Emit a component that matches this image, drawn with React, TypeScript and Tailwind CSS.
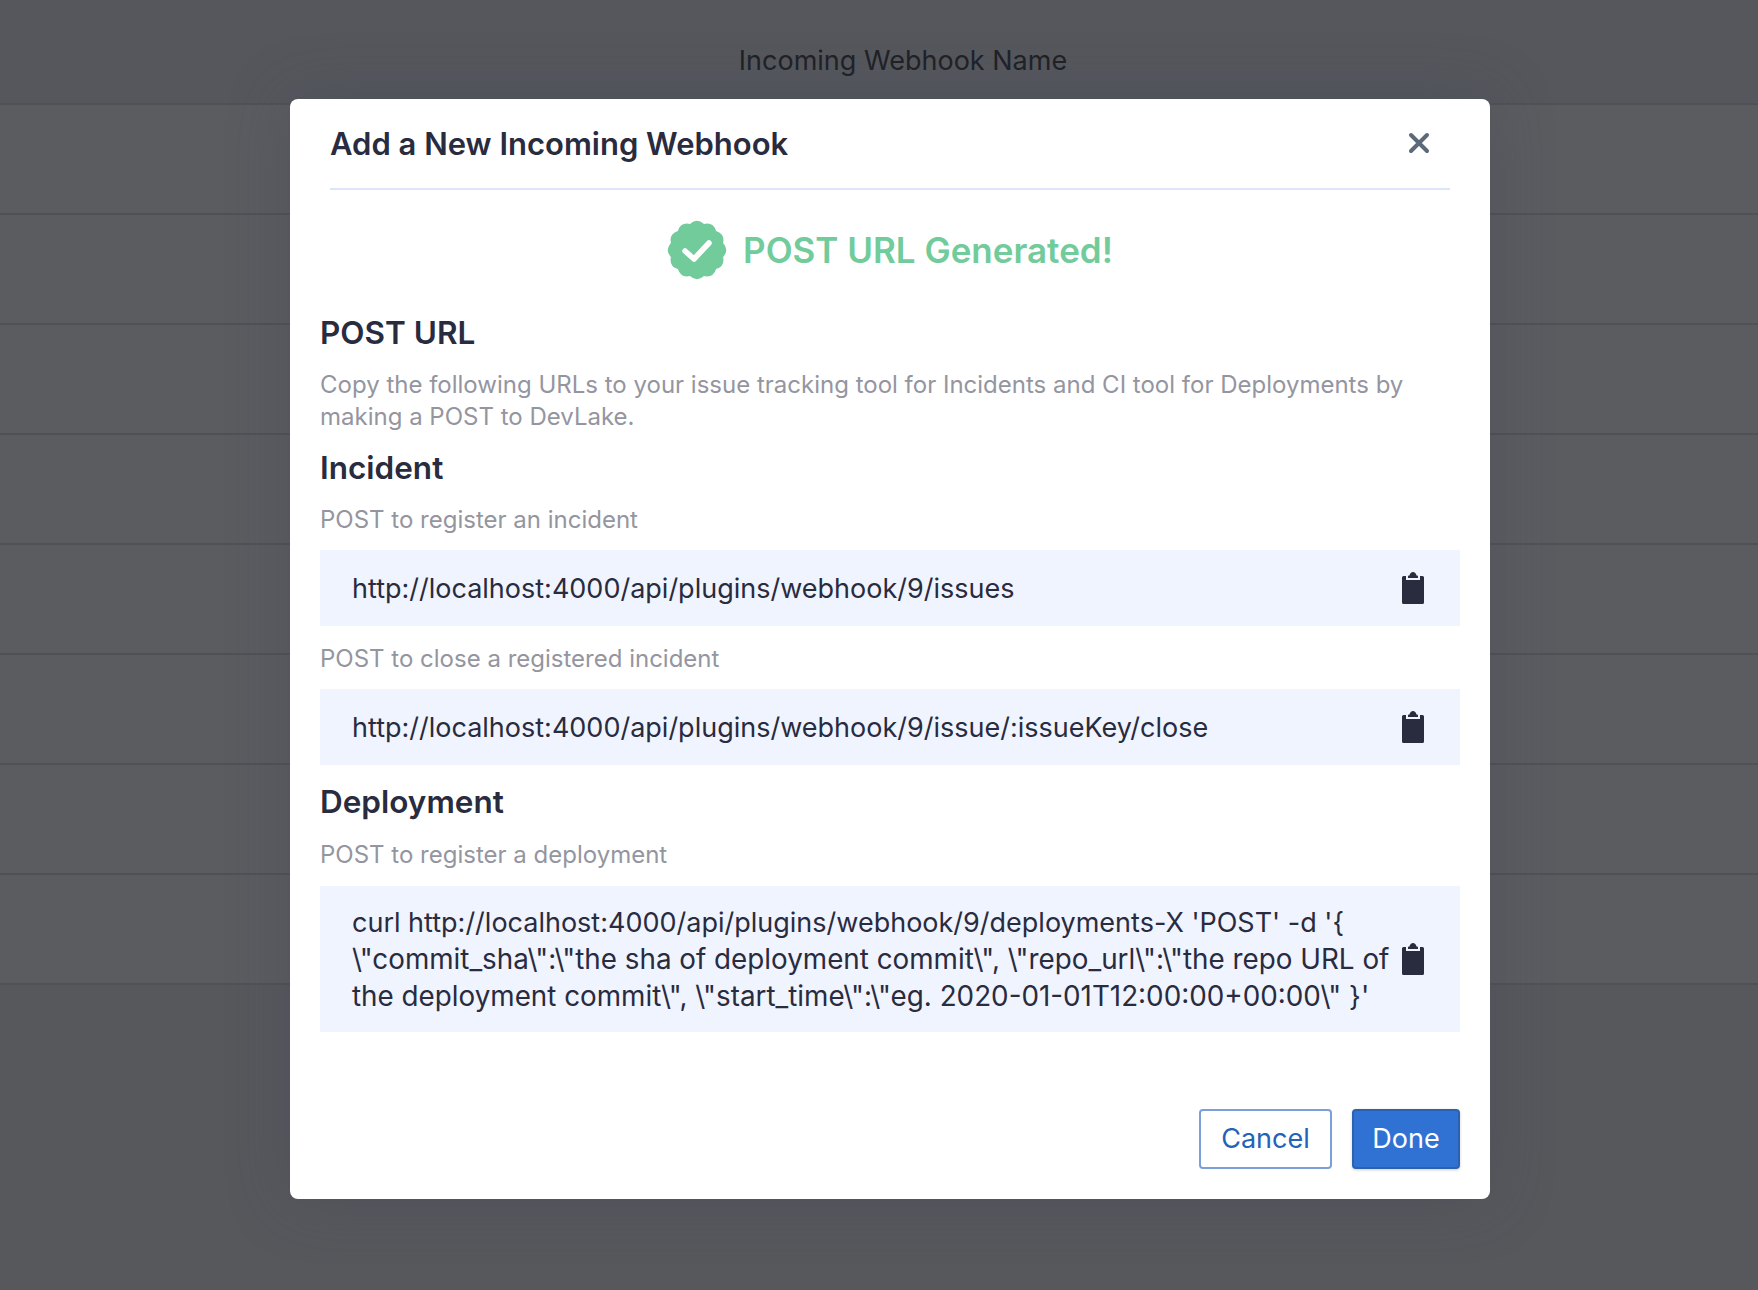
import React from 'react';

// scalloped badge outline, 12 bumps with one at the top
const sealPath = (() => {
  const n = 12;
  const parts: string[] = [];
  for (let i = 0; i < n; i++) {
    const a = ((i - 0.5) / n) * Math.PI * 2 - Math.PI / 2;
    const b = ((i + 0.5) / n) * Math.PI * 2 - Math.PI / 2;
    const m = (a + b) / 2;
    const ax = 30 + 27 * Math.cos(a);
    const ay = 30 + 27 * Math.sin(a);
    const bx = 30 + 27 * Math.cos(b);
    const by = 30 + 27 * Math.sin(b);
    const cx = 30 + 32.5 * Math.cos(m);
    const cy = 30 + 32.5 * Math.sin(m);
    if (i === 0) parts.push(`M${ax.toFixed(2)} ${ay.toFixed(2)}`);
    parts.push(`Q${cx.toFixed(2)} ${cy.toFixed(2)} ${bx.toFixed(2)} ${by.toFixed(2)}`);
  }
  return parts.join(' ') + 'Z';
})();

const SealCheck = () => (
  <svg width="60" height="60" viewBox="0 0 60 60" className="shrink-0">
    <path d={sealPath} fill="#71cb9a" />
    <path d="M18 31l9 8 15-16" fill="none" stroke="#fff" strokeWidth="5.5" strokeLinecap="round" strokeLinejoin="round" />
  </svg>
);

const ClipboardIcon = () => (
  <svg width="22" height="32" viewBox="0 0 22 32" className="shrink-0">
    <path d="M1.5 4H4v4h14V4h2.5A1.5 1.5 0 0 1 22 5.500V30.500A1.500 1.500 0 0 1 20.500 32H1.500A1.500 1.500 0 0 1 0 30.500V5.500A1.500 1.500 0 0 1 1.500 4Z" fill="#292b3f" />
    <path d="M6 6V4.500C6 4 6.500 3.500 7 3.500H7.500C8 1.500 9.300 0 11 0S14 1.500 14.500 3.500H15C15.500 3.500 16 4 16 4.500V6Z" fill="#292b3f" />
  </svg>
);

const rows = [0, 1, 2, 3, 4, 5, 6, 7];

const CopyBox = ({ children, tall }: { children: React.ReactNode; tall?: boolean }) => (
  <div className={`flex items-center justify-between bg-[#f0f4fe] pl-8 pr-[36px] text-[27px] leading-[36px] text-[#292b3f] ${tall ? 'py-[17px]' : 'h-[76px]'}`}>
    <div className="min-w-0 flex-1 pt-[2px] pr-3 break-words">{children}</div>
    <ClipboardIcon />
  </div>
);

export default function App() {
  return (
    <div className="relative h-[1290px] w-full overflow-hidden bg-[#57585c] font-['Inter',sans-serif]">
      {/* table behind the overlay */}
      <div className="flex h-[105px] items-center justify-center border-b-2 border-[#4f5155] bg-[#55575c] pt-[20px] pl-[48px] text-[27px] text-[#1f2126]">
        Incoming Webhook Name
      </div>
      {rows.map((r) => (
        <div key={r} className="h-[110px] border-b-2 border-[#4f5155] bg-[#5b5c60]" />
      ))}

      <div className="absolute inset-0 flex items-start justify-center pt-[99px] pl-[22px]">
        <div className="h-[1100px] w-[1200px] rounded-[8px] bg-white px-[30px] shadow-[0_0_60px_rgba(60,70,90,0.35)]">
          <div className="mx-[10px] flex h-[91px] items-center justify-between border-b-2 border-[#dde5fb]">
            <h1 className="pt-[2px] text-[31px] font-semibold text-[#292b3f]">Add a New Incoming Webhook</h1>
            <svg width="22" height="22" viewBox="0 0 22 22" className="mr-[20px] mb-[2px]">
              <path d="M3 3l16 16M19 3L3 19" stroke="#5c6979" strokeWidth="4" strokeLinecap="round" />
            </svg>
          </div>

          <div className="mt-[30px] flex items-center justify-center gap-[16px]">
            <SealCheck />
            <span className="text-[35px] font-semibold text-[#71cb9a]">POST URL Generated!</span>
          </div>

          <h2 className="mt-[29px] text-[31.500px] font-semibold text-[#292b3f]">POST URL</h2>
          <p className="mt-[13px] text-[24px] leading-[32px] text-[#94959f]">
            Copy the following URLs to your issue tracking tool for Incidents and CI tool for Deployments by making a POST to DevLake.
          </p>

          <h2 className="mt-[11px] text-[31.500px] font-semibold text-[#292b3f]">Incident</h2>
          <div className="mt-[12px] text-[24px] leading-[32px] text-[#94959f]">POST to register an incident</div>
          <div className="mt-[14px]">
            <CopyBox>http://localhost:4000/api/plugins/webhook/9/issues</CopyBox>
          </div>
          <div className="mt-[17px] text-[24px] leading-[32px] text-[#94959f]">POST to close a registered incident</div>
          <div className="mt-[14px]">
            <CopyBox>http://localhost:4000/api/plugins/webhook/9/issue/:issueKey/close</CopyBox>
          </div>

          <h2 className="mt-[13px] text-[31.500px] font-semibold text-[#292b3f]">Deployment</h2>
          <div className="mt-[14px] text-[24px] leading-[32px] text-[#94959f]">POST to register a deployment</div>
          <div className="mt-[15px]">
            <CopyBox tall>
              {'curl http://localhost:4000/api/plugins/webhook/9/deployments-X \'POST\' -d \'{ '}
              <span className="text-[27.800px]">
                {'\\"commit_sha\\":\\"the sha of deployment commit\\", \\"repo_url\\":\\"the repo URL of the deployment commit\\", \\"start_time\\":\\"eg. 2020-01-01T12:00:00+00:00\\" }\''}
              </span>
            </CopyBox>
          </div>

          <div className="mt-[77px] flex justify-end gap-[20px]">
            <button className="h-[60px] w-[133px] rounded-[4px] border-2 border-[#7b9fd8] bg-white text-[27px] text-[#2262b8]">Cancel</button>
            <button className="h-[60px] w-[108px] rounded-[4px] border-2 border-[#2a62b0] bg-[#2f72d3] text-[27px] text-white shadow-[0_1px_3px_rgba(0,0,0,0.2)]">Done</button>
          </div>
        </div>
      </div>
    </div>
  );
}
